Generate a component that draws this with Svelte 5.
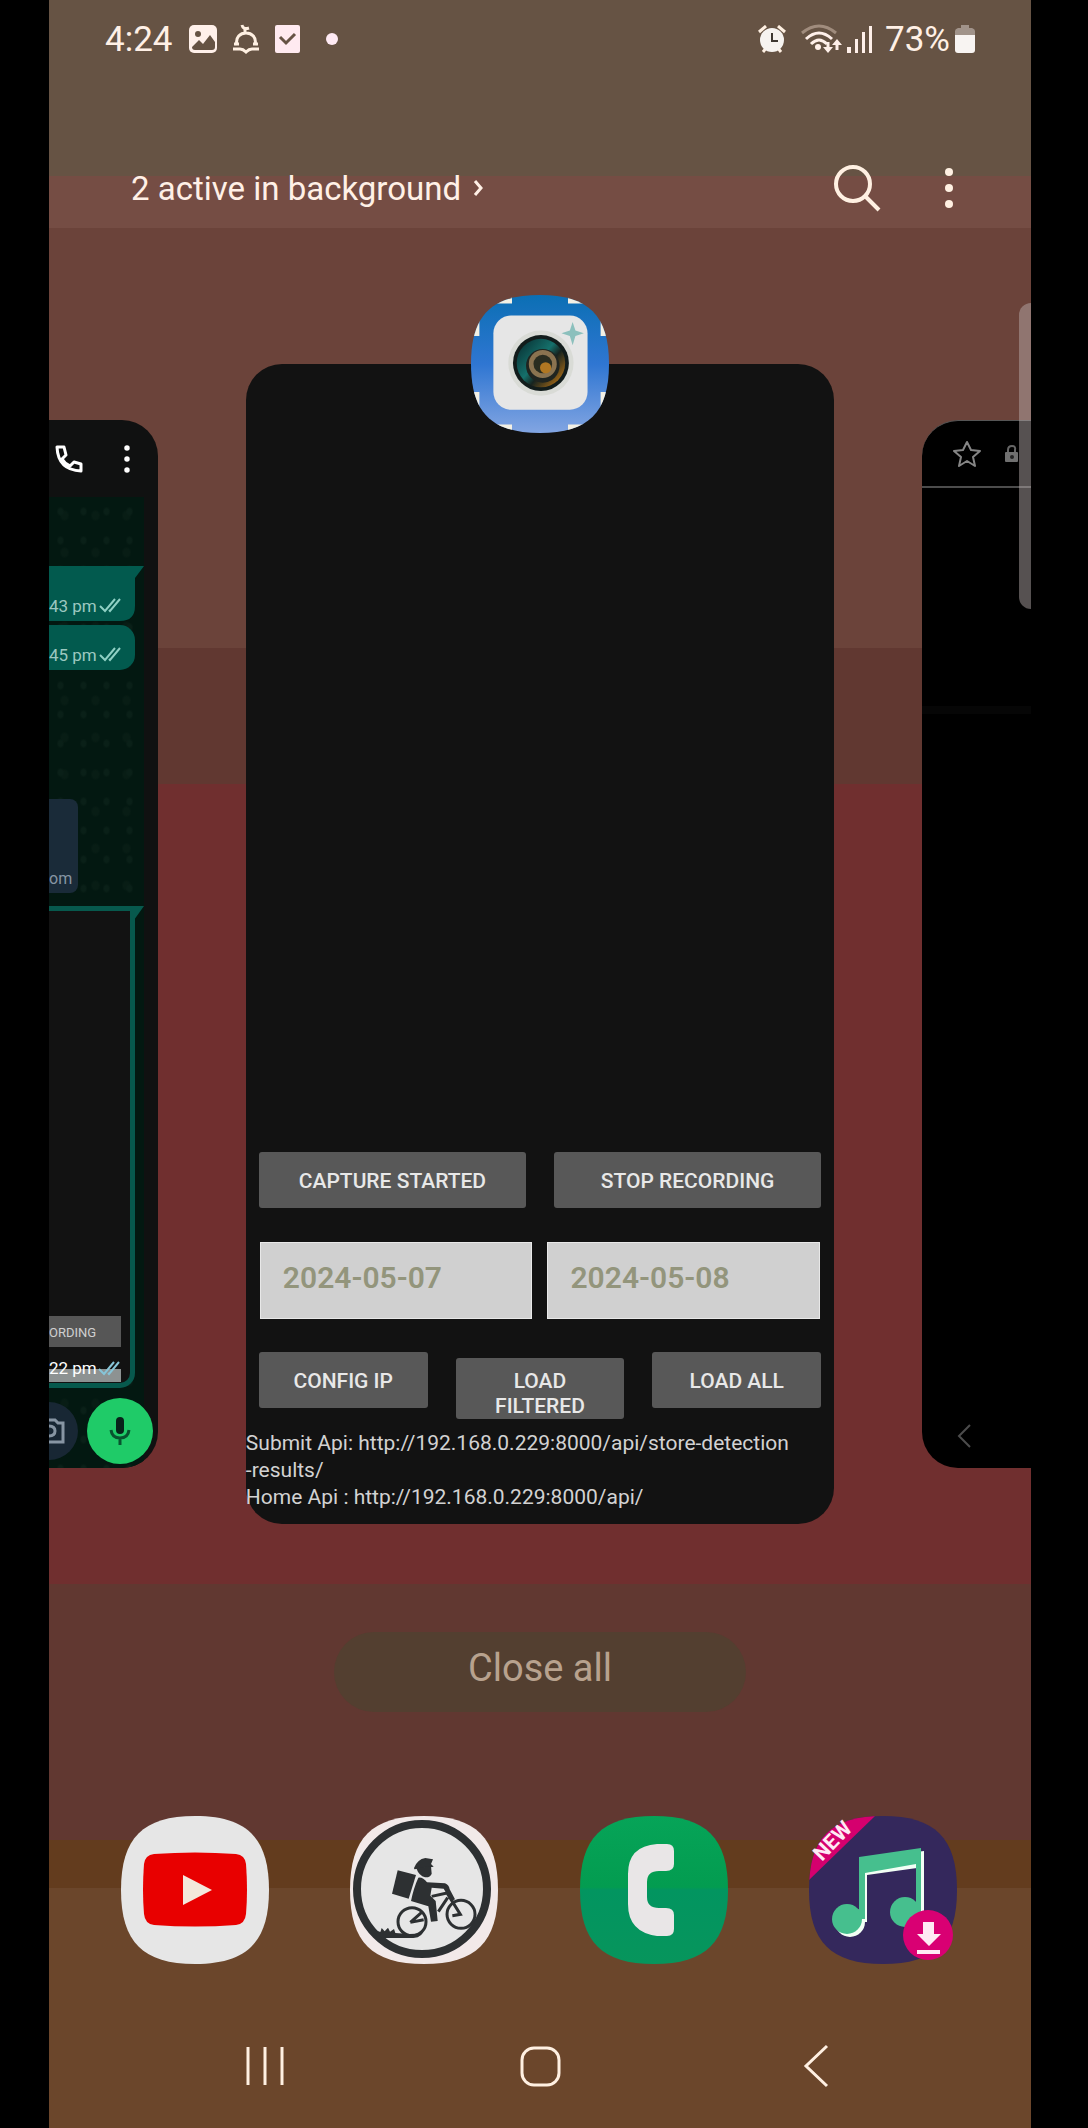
<script>
  let startDate = $state('2024-05-07');
  let endDate = $state('2024-05-08');

  const squircle =
    'M74 0C126 0 148 22 148 74C148 126 126 148 74 148C22 148 0 126 0 74C0 22 22 0 74 0Z';
</script>

{#snippet kebab()}
  <svg class="kebab" viewBox="0 0 12 44" aria-hidden="true">
    <circle cx="6" cy="6" r="4" /><circle cx="6" cy="22" r="4" /><circle cx="6" cy="38" r="4" />
  </svg>
{/snippet}

{#snippet ticks()}
  <svg class="ticks" viewBox="0 0 24 16" aria-hidden="true">
    <path d="M2 9l5 5L17 2M11 13l1 1L22 2" />
  </svg>
{/snippet}

<div class="device">
  <main class="screen">
    <header class="status">
      <div class="status-left">
        <span class="clock">4:24</span>
        <svg width="28" height="28" viewBox="0 0 28 28" aria-label="Picture">
          <rect width="28" height="28" rx="5" fill="#fff0ea" />
          <circle cx="9" cy="9" r="3" fill="#665344" />
          <path d="M3 22l7-7 4 4 7-9 5 7v5q0 3-3 3H6q-3 0-3-3z" fill="#665344" />
        </svg>
        <svg width="26" height="30" viewBox="0 0 26 30" fill="none" stroke="#fff0e2" stroke-width="3" aria-label="Prayer time">
          <path d="M9 1q1 5 7 3M12 5v4M4 21C0 5 26 5 22 21" />
          <path d="M0 25h7q3 0 6 3q3-3 6-3h7M1 20h5M20 20h5" />
        </svg>
        <svg width="25" height="30" viewBox="0 0 25 30" aria-label="Task">
          <rect y="1" width="25" height="28" rx="2" fill="#ffeaf0" />
          <path d="M5 13l6 6 9-9" fill="none" stroke="#665344" stroke-width="3" />
        </svg>
        <span class="dot"></span>
      </div>
      <div class="status-right">
        <svg class="alarm" width="28" height="28" viewBox="0 0 28 28" aria-label="Alarm">
          <path d="M1 7l7-6M27 7l-7-6M5 27l4-5M23 27l-4-5" stroke="#fff0e2" stroke-width="3" />
          <circle cx="14" cy="15" r="12" fill="#f6f3f0" />
          <path d="M14 8v8h6" fill="none" stroke="#3e3832" stroke-width="2" />
        </svg>
        <svg class="wifi" width="42" height="30" viewBox="0 0 42 30" fill="none" stroke-width="3" aria-label="Wi-Fi">
          <path d="M2 9q17-14 34 0" stroke="#a08c7d" />
          <path d="M6 15q13-12 26 0M11 20q8-8 16 0" stroke="#fff0ea" />
          <circle cx="18" cy="23" r="3" fill="#fff0ea" />
          <path d="M28 18v7M37 26v-7" stroke="#fff0ea" />
          <path d="M23 23h10l-5 6zM32 21h10l-5-6z" fill="#fff0ea" />
        </svg>
        <svg class="bars" width="26" height="28" viewBox="0 0 26 28" fill="#fff0ea" aria-label="Signal">
          <path d="M0 22h4v6H0zM8 14h3v14H8zM15 7h3v21h-3zM22 1h3v27h-3z" />
        </svg>
        <span class="charge">73%</span>
        <svg width="20" height="28" viewBox="0 0 20 28" aria-label="Battery">
          <path d="M0 10V6q0-2 3-3h3V0h8v3h3q3 1 3 3v4z" fill="#a1938a" />
          <path d="M0 10h20v15q0 3-3 3H3q-3 0-3-3z" fill="#f8f4f2" />
        </svg>
      </div>
    </header>

    <div class="toolbar">
      <button class="active-apps">
        <span>2 active in background</span>
        <svg width="10" height="18" viewBox="0 0 10 18" aria-hidden="true">
          <path d="M2 2l6 7-6 7" fill="none" stroke="#fff0e6" stroke-width="3" />
        </svg>
      </button>
      <button class="search" aria-label="Search">
        <svg width="48" height="48" viewBox="0 0 48 48" fill="none" stroke="#fff0e2" stroke-width="4">
          <circle cx="20" cy="20" r="17" /><path d="M32 32l14 14" />
        </svg>
      </button>
      <button class="more" aria-label="More options">{@render kebab()}</button>
    </div>

    <section class="carousel" aria-label="Recent apps">
      <article class="side chat">
        <div class="chat-head">
          <svg width="28" height="28" viewBox="0 0 28 28" aria-label="Call">
            <path d="M2 2h7l2 8-4 4q3 5 8 7l4-4 7 2v7Q3 25 2 2z" fill="none" stroke="#fff" stroke-width="3" stroke-linejoin="round" />
          </svg>
          {@render kebab()}
        </div>
        <div class="chat-body">
          <div class="bubble first"><span>43 pm</span>{@render ticks()}</div>
          <div class="bubble second"><span>45 pm</span>{@render ticks()}</div>
          <div class="incoming">om</div>
          <div class="photo">
            <svg class="tail" width="14" height="14" viewBox="0 0 14 14" aria-hidden="true"><path d="M0 0h14L4 14H0z" fill="#07594d" /></svg>
            <div class="mini-button">ORDING</div>
            <div class="photo-time"><span>22 pm</span>{@render ticks()}</div>
          </div>
          <div class="compose">
            <div class="camera">
              <svg width="16" height="26" viewBox="4 0 16 26" fill="none" stroke="#8795a3" stroke-width="3" aria-label="Camera">
                <path d="M0 24h18V5h-5l-3-3H0M3 8q7 0 7 5t-7 5" />
              </svg>
            </div>
            <div class="mic">
              <svg width="22" height="30" viewBox="0 0 22 30" aria-label="Voice message">
                <rect x="7" y="1" width="8" height="17" rx="4" fill="#08231a" />
                <path d="M2 14q1 8 9 8t9-8M11 22v7" fill="none" stroke="#08532f" stroke-width="3" />
              </svg>
            </div>
          </div>
        </div>
      </article>

      <article class="current">
        <svg class="app-icon" viewBox="0 0 148 148" aria-label="Camera app">
          <defs>
            <linearGradient id="frame" x2="0" y2="1">
              <stop stop-color="#0b6fb4" /><stop offset=".5" stop-color="#2f76d2" /><stop offset="1" stop-color="#82a5e2" />
            </linearGradient>
            <linearGradient id="rim" x1=".1" y1=".2" x2=".9" y2=".9">
              <stop stop-color="#0b3f40" /><stop offset=".4" stop-color="#15706b" /><stop offset=".6" stop-color="#17231f" /><stop offset="1" stop-color="#a96c16" />
            </linearGradient>
            <clipPath id="icon-shape"><path d={squircle} /></clipPath>
          </defs>
          <g clip-path="url(#icon-shape)">
            <rect width="148" height="148" fill="url(#frame)" />
            <path d="M24 9h20v-8H24zM104 9h20v-8h-20zM2 44h7V26H2zM139 44h7V26h-7zM2 104h7v20H2zM139 104h7v20h-7zM24 139h20v8H24zM104 139h20v8h-20z" fill="#f3f0e4" />
            <rect x="24" y="22" width="101" height="101" rx="19" fill="#e6e6e6" />
            <circle cx="75" cy="73" r="35" fill="#d9dbd6" />
            <circle cx="75" cy="73" r="30" fill="#121c1b" />
            <circle cx="75" cy="73" r="26" fill="url(#rim)" />
            <circle cx="77" cy="76" r="18" fill="#1f2420" />
            <circle cx="77" cy="74" r="15" fill="#8a7350" />
            <circle cx="77" cy="74" r="10" fill="#2a2d20" />
            <circle cx="80" cy="78" r="6" fill="#b07722" />
            <path d="M109 29l3 9 9 3-9 3-3 10-3-10-9-3 9-3z" fill="#8cc0bd" />
          </g>
        </svg>
        <div class="preview"></div>
        <div class="row">
          <button class="action">CAPTURE STARTED</button>
          <button class="action">STOP RECORDING</button>
        </div>
        <div class="dates">
          <input type="text" aria-label="Start date" bind:value={startDate} />
          <input type="text" aria-label="End date" bind:value={endDate} />
        </div>
        <div class="row">
          <button class="action">CONFIG IP</button>
          <button class="action wrapped">LOAD FILTERED</button>
          <button class="action">LOAD ALL</button>
        </div>
        <p class="log">
          Submit Api: http://192.168.0.229:8000/api/store-detection<br />-results/<br />Home Api : http://192.168.0.229:8000/api/
        </p>
      </article>

      <article class="side browser">
        <div class="browser-head">
          <svg width="28" height="28" viewBox="0 0 28 28" fill="none" stroke="#858585" stroke-width="2" aria-label="Bookmark">
            <path d="M14 2l4 8 9 1-7 6 2 9-8-5-8 5 2-9-7-6 9-1z" stroke-linejoin="round" />
          </svg>
          <svg width="13" height="18" viewBox="0 0 13 18" aria-label="Secure">
            <path d="M3 8V5q0-4 4-4t3 4v3" fill="none" stroke="#666" stroke-width="2" />
            <rect y="7" width="13" height="10" rx="1" fill="#707070" /><circle cx="7" cy="12" r="2" fill="#222" />
          </svg>
        </div>
        <div class="browser-body"></div>
        <svg class="browser-back" width="14" height="24" viewBox="0 0 14 24" fill="none" stroke="#4c4c4c" stroke-width="2" aria-label="Back">
          <path d="M13 1L2 12l11 11" />
        </svg>
      </article>
      <div class="edge-handle"></div>
    </section>

    <button class="close-all">Close all</button>

    <nav class="dock" aria-label="Suggested apps">
      <button aria-label="YouTube">
        <svg viewBox="0 0 148 148">
          <path d={squircle} fill="#e6e6e6" />
          <path d="M33 38q41-3 82 0 9 1 10 10 2 26 0 50-1 10-10 11-41 3-82 0-9-1-10-11-2-24 0-50 1-9 10-10z" fill="#e80000" />
          <path d="M62 59v30l29-15z" fill="#f3e8dc" />
        </svg>
      </button>
      <button aria-label="Delivery">
        <svg viewBox="0 0 148 148">
          <path d={squircle} fill="#f2e9e9" />
          <circle cx="72" cy="73" r="65" fill="#e6e6e6" stroke="#2d3032" stroke-width="8" />
          <g transform="scale(.3334) translate(-755 -77)" fill="#2d3032">
            <path d="M947 233q10-26 34-30l23 4-6 14 8 8-58 8z" />
            <path d="M954 234l44-6 2 22q-4 12-20 11-18-4-26-27z" />
            <path d="M898 240l55 14-22 71-50-15z" />
            <path d="M960 262q14-2 26 14l54 3q12 4 14 18l16 30-12 6-22-38-36-3-4 24 16 16 6 60-20 2-8-46-52-16q8-40 22-70z" />
            <g fill="none" stroke="#2d3032" stroke-width="9">
              <circle cx="941" cy="394" r="42" /><circle cx="1088" cy="372" r="42" />
              <path d="M1000 318l46-10 40 64-24 4M1048 322l-28 42M936 396l34-30M936 396l40-8" />
            </g>
            <path d="M832 420l14 5 4-12 9 10 10-11 6 12 12-8 4 12 42 3q40 0 42-16 0 26-30 28H850z" />
          </g>
        </svg>
      </button>
      <button aria-label="Phone">
        <svg viewBox="0 0 148 148">
          <defs>
            <linearGradient id="call" x2="0" y2="1">
              <stop stop-color="#06a458" /><stop offset=".48" stop-color="#039c50" /><stop offset=".5" stop-color="#029560" /><stop offset="1" stop-color="#07955c" />
            </linearGradient>
          </defs>
          <path d={squircle} fill="url(#call)" />
          <path d="M77 28h10q7 0 7 7v13q0 7-8 7h-7q-12 0-12 11v15q0 11 12 11h7q8 0 8 7v14q0 7-7 7H77Q48 116 48 88V58Q48 30 77 28z" fill="#e9e6e7" />
        </svg>
      </button>
      <button aria-label="Music downloader">
        <svg viewBox="0 0 148 148">
          <g clip-path="url(#icon-shape)">
            <rect width="148" height="148" fill="#34285c" />
            <path d="M0 0h66L0 64z" fill="#d5006e" />
          </g>
          <text x="0" y="0" transform="translate(13 46) rotate(-46)" class="new">NEW</text>
          <g fill="#f2fff5" transform="translate(1 2)">
            <circle cx="40" cy="104" r="15" /><path d="M51 41l63-8v70h-7V50L57 57v47h-6z" />
          </g>
          <g fill="#46bf8e">
            <circle cx="38" cy="103" r="15" /><circle cx="96" cy="96" r="15" />
            <path d="M50 41l62-9v64h-5V48l-51 9v46h-6z" />
          </g>
          <circle cx="119" cy="119" r="25" fill="#d90073" />
          <path d="M114 106h11v12h7l-12 12-12-12h6zM108 134h23v4h-23z" fill="#ffeaf4" />
        </svg>
      </button>
    </nav>

    <nav class="system" aria-label="System navigation">
      <button aria-label="Recents">
        <svg width="44" height="44" viewBox="0 0 44 44"><path d="M5 3v38M22 3v38M39 3v38" /></svg>
      </button>
      <button aria-label="Home">
        <svg width="44" height="44" viewBox="0 0 44 44"><rect x="4" y="4" width="37" height="37" rx="12" /></svg>
      </button>
      <button aria-label="Back">
        <svg width="44" height="44" viewBox="0 0 44 44"><path d="M34 2L13 22l21 20" /></svg>
      </button>
    </nav>
  </main>
</div>

<style>
  :global(body) {
    margin: 0;
    background: #000;
  }

  .device {
    padding: 0 57px 0 49px;
    background: #000;
    font-family: Roboto, sans-serif;
  }

  .device * {
    box-sizing: border-box;
  }

  svg {
    display: block;
    flex: none;
  }

  button {
    padding: 0;
    border: 0;
    background: none;
    color: inherit;
    font: inherit;
  }

  .screen {
    overflow: hidden;
    color: #fff0e6;
    background: linear-gradient(
      #665344 176px, #754d44 176px, #754d44 228px, #6b433a 228px, #6b433a 648px,
      #613831 648px, #613831 784px, #702f2f 784px, #702f2f 1584px, #613831 1584px,
      #613831 1840px, #633c1e 1840px, #633c1e 1888px, #6b462b 1888px
    );
  }

  .status {
    display: flex;
    justify-content: space-between;
    height: 78px;
    padding: 0 56px;
    font-size: 35px;
  }

  .status-left,
  .status-right {
    display: flex;
    align-items: center;
  }

  .status-left {
    gap: 16px;
  }

  .dot {
    width: 12px;
    height: 12px;
    margin-left: 10px;
    border-radius: 50%;
    background: #ffeaf4;
  }

  .alarm {
    margin-right: 14px;
  }

  .bars {
    margin-right: 12px;
  }

  .wifi,
  .charge {
    margin-right: 5px;
  }

  .toolbar {
    display: flex;
    align-items: center;
    height: 64px;
    margin: 78px 62px 0 82px;
  }

  .active-apps {
    display: flex;
    align-items: center;
    gap: 12px;
    margin-right: auto;
    font-size: 33px;
  }

  .search {
    width: 56px;
    margin-right: 44px;
  }

  .search svg,
  .more svg {
    margin: 0 auto;
  }

  .more {
    width: 40px;
  }

  .kebab {
    width: 12px;
    height: 44px;
    fill: #fff0e2;
  }

  .carousel {
    position: relative;
    display: grid;
    grid-template-columns: 109fr 589fr 109fr;
    gap: 88px;
    align-items: center;
    margin-top: 144px;
  }

  .side {
    display: flex;
    flex-direction: column;
    min-width: 0;
    height: 1048px;
    overflow: hidden;
  }

  .chat {
    border-radius: 0 36px 36px 0;
    background: #101111;
  }

  .chat-head {
    display: flex;
    justify-content: space-between;
    align-items: center;
    height: 77px;
    padding: 0 25px 0 6px;
  }

  .chat-head .kebab {
    height: 30px;
    fill: #fff;
  }

  .chat-body {
    display: flex;
    flex: 1;
    flex-direction: column;
    margin-right: 14px;
    background-color: #031811;
    background-image: radial-gradient(#0a2018 2px, transparent 4px), radial-gradient(#081d15 3px, transparent 5px);
    background-size: 23px 29px, 31px 37px;
    color: #9cc8c0;
    font-size: 17px;
    line-height: 20px;
  }

  .bubble {
    display: flex;
    align-items: flex-end;
    justify-content: space-between;
    margin-right: 9px;
    padding: 0 13px 5px 0;
    background: #025a4e;
    white-space: nowrap;
  }

  .ticks {
    width: 24px;
    height: 16px;
    margin-bottom: 3px;
    fill: none;
    stroke: #8fd0c4;
    stroke-width: 2px;
  }

  .first {
    height: 55px;
    margin: 69px 0 4px;
    padding-right: 22px;
    clip-path: path('M0 0H95L86 12V40Q86 55 71 55H0Z');
  }

  .second {
    height: 45px;
    border-radius: 0 15px 15px 0;
  }

  .incoming {
    width: 29px;
    height: 94px;
    margin: 129px 0 13px;
    padding: 70px 0 0;
    border-radius: 0 8px 8px 0;
    background: #1a2b39;
    color: #8795a3;
    font-size: 16px;
  }

  .photo {
    position: relative;
    display: flex;
    flex-direction: column;
    justify-content: flex-end;
    height: 482px;
    margin-right: 9px;
    padding-right: 9px;
    padding-bottom: 1px;
    border: solid #07594d;
    border-width: 5px 5px 5px 0;
    border-radius: 0 0 15px 0;
    background: #121212;
  }

  .tail {
    position: absolute;
    top: -5px;
    right: -14px;
  }

  .mini-button {
    height: 31px;
    margin-bottom: 13px;
    background: #565656;
    color: #d0d0d0;
    font-size: 13px;
    line-height: 33px;
  }

  .photo-time {
    display: flex;
    justify-content: space-between;
    height: 22px;
    background: linear-gradient(#121212 9px, #8d9292 9px);
    color: #fff;
    line-height: 16px;
    white-space: nowrap;
  }

  .photo-time .ticks {
    stroke: #86c5d8;
  }

  .compose {
    display: flex;
    align-items: center;
    gap: 9px;
    width: 104px;
    margin-top: 10px;
  }

  .camera {
    display: flex;
    align-items: center;
    width: 29px;
    height: 58px;
    border-radius: 0 29px 29px 0;
    background: #182734;
    overflow: hidden;
  }

  .mic {
    display: grid;
    flex: none;
    place-items: center;
    width: 66px;
    height: 66px;
    border-radius: 50%;
    background: #1fcb68;
  }

  .current {
    position: relative;
    min-width: 0;
    border-radius: 36px;
    background: #121212;
  }

  .app-icon {
    position: absolute;
    top: -69px;
    left: calc(50% - 69px);
    width: 138px;
    height: 138px;
  }

  .preview {
    min-height: 788px;
  }

  .row {
    display: grid;
    grid-auto-flow: column;
    grid-auto-columns: minmax(0, 1fr);
    gap: 28px;
    margin: 0 13px;
  }

  .action {
    height: 56px;
    padding-top: 2px;
    border-radius: 3px;
    background: #585858;
    color: #e8e8e8;
    font-size: 21px;
    font-weight: 500;
    line-height: 25px;
  }

  .wrapped {
    height: 61px;
    margin-top: 6px;
    padding: 10px 24px 0;
    overflow: hidden;
  }

  .dates {
    display: grid;
    grid-template-columns: 1fr 1fr;
    gap: 15px;
    margin: 34px 14px 33px;
  }

  .dates input {
    min-width: 0;
    height: 77px;
    padding: 0 22px 6px;
    border: 1px solid #e8e8e8;
    border-radius: 0;
    background: #d0d0d0;
    color: #93957c;
    font: 600 30px Roboto, sans-serif;
  }

  .log {
    margin: 0;
    padding: 11px 0 13px;
    color: #d2d2d2;
    font-size: 21px;
    line-height: 27px;
    white-space: nowrap;
  }

  .browser {
    border-top: 1px solid #555;
    border-radius: 36px 0 0 36px;
    background: #000;
  }

  .browser-head {
    display: flex;
    justify-content: space-between;
    align-items: center;
    height: 67px;
    padding: 0 13px 0 31px;
    border-bottom: 2px solid #4c4c4c;
  }

  .browser-body {
    flex: 1;
    background: linear-gradient(#000 218px, #060606 218px, #060606 226px, #000 226px);
  }

  .browser-back {
    margin: 0 0 20px 35px;
  }

  .edge-handle {
    position: absolute;
    top: -61px;
    right: 0;
    width: 12px;
    height: 306px;
    border-radius: 12px 0 0 12px;
    background: rgba(190, 180, 180, 0.45);
  }

  .close-all {
    display: block;
    width: 412px;
    height: 80px;
    margin: 108px auto 0;
    padding-bottom: 8px;
    border-radius: 40px;
    background: #533f30;
    color: #b8a28e;
    font-size: 38px;
  }

  .dock {
    display: flex;
    justify-content: space-between;
    margin: 104px 74px 0 72px;
  }

  .dock svg {
    width: 148px;
    height: 148px;
  }

  .new {
    fill: #ffeaf4;
    font: 700 21px Roboto, sans-serif;
  }

  .system {
    display: grid;
    grid-template-columns: repeat(3, 1fr);
    margin-top: 70px;
    padding: 0 78px 30px;
  }

  .system button {
    display: grid;
    place-items: center;
    height: 64px;
  }

  .system svg {
    fill: none;
    stroke: #fff0e2;
    stroke-width: 3px;
  }
</style>
